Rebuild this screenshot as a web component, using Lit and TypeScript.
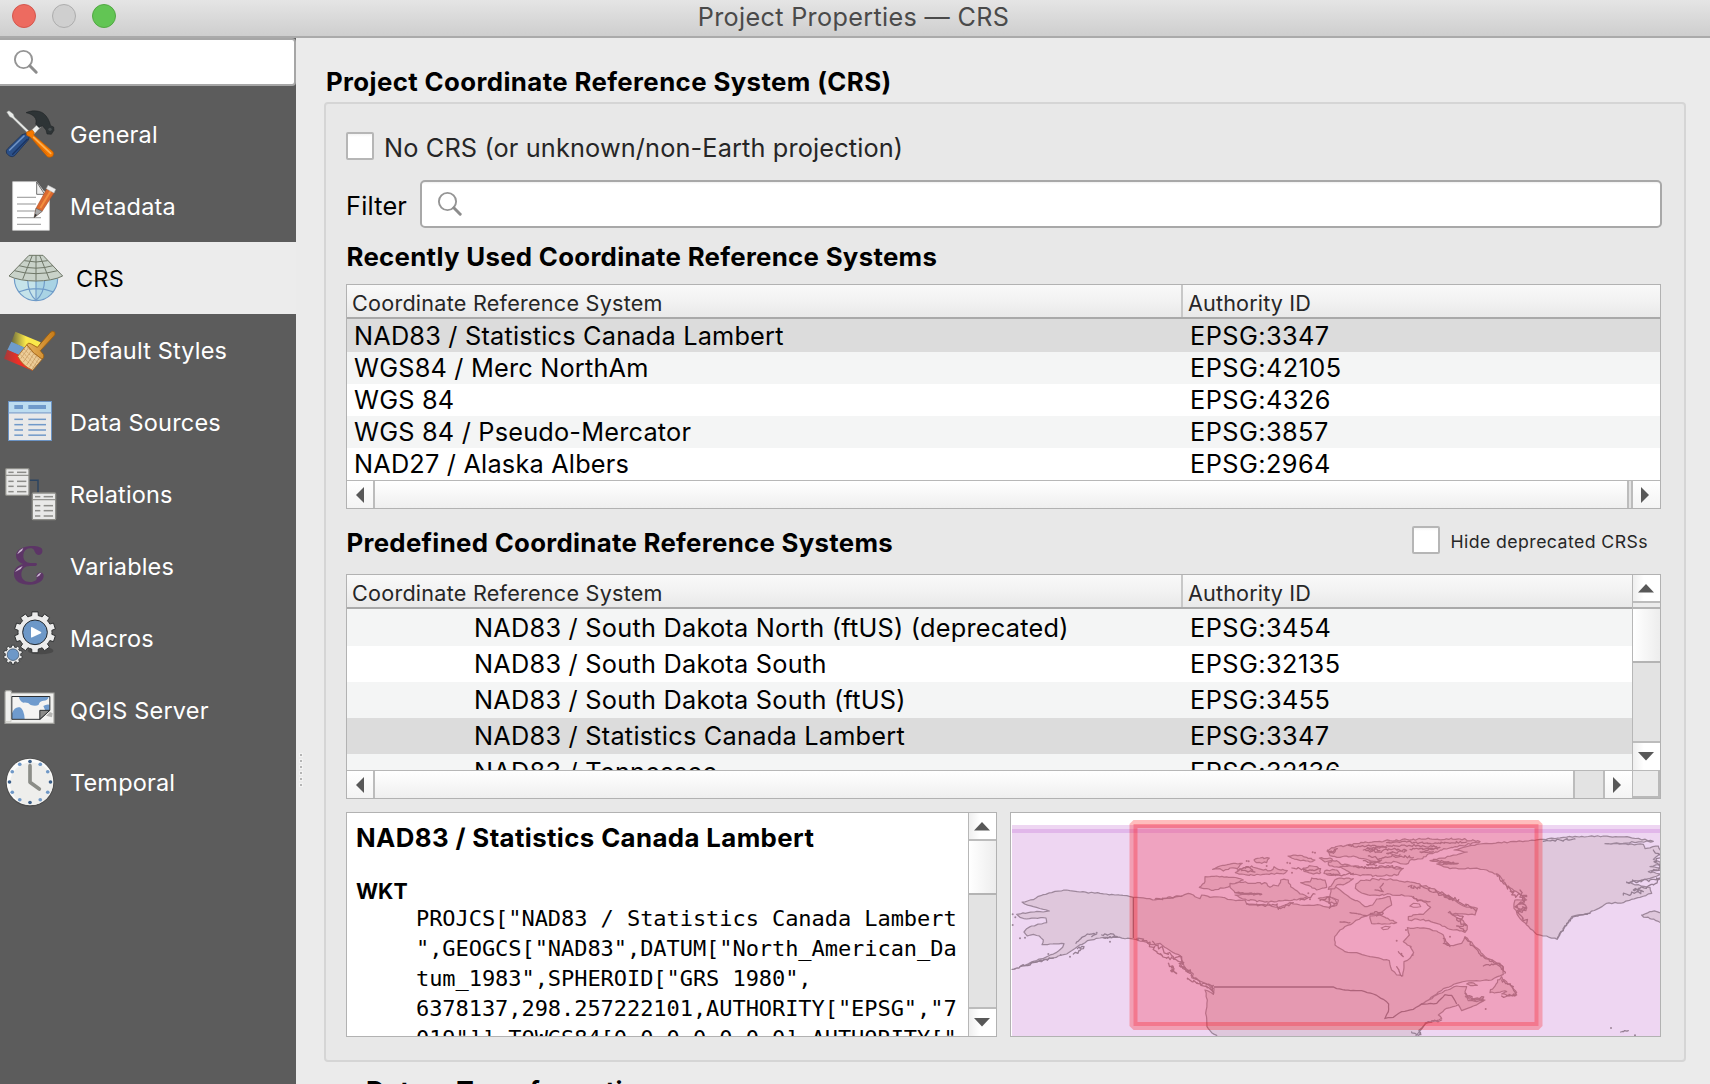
import { LitElement, html, svg, css } from "lit";
import { customElement, property } from "lit/decorators.js";
import { classMap } from "lit/directives/class-map.js";

type Pt = [number, number];

/* ---------- coastline helpers ---------- */

function parse(s: string): Pt[] {
  return s.trim().split(/\s+/).map((p) => p.split(",").map(Number) as Pt);
}

/** Subdivides each segment and nudges the new points, giving a ragged coast. */
function coast(s: string, amp = 4, closed = true, step = 9): string {
  const pts = parse(s);
  let seed = pts.length * 7919 + Math.round(pts[0][0] * 13 + pts[0][1] * 7);
  const rnd = () => {
    seed = (seed * 1103515245 + 12345) % 2147483648;
    return seed / 2147483648 - 0.5;
  };
  const out: string[] = [];
  const n = closed ? pts.length : pts.length - 1;
  for (let i = 0; i < n; i++) {
    const [x1, y1] = pts[i];
    const [x2, y2] = pts[(i + 1) % pts.length];
    const len = Math.hypot(x2 - x1, y2 - y1);
    const k = Math.max(1, Math.round(len / step));
    out.push(`${x1},${y1}`);
    if (len > 400) continue;
    for (let j = 1; j < k; j++) {
      const t = j / k;
      out.push(`${(x1 + (x2 - x1) * t + rnd() * amp).toFixed(1)},${(y1 + (y2 - y1) * t + rnd() * amp).toFixed(1)}`);
    }
  }
  if (!closed) out.push(pts[pts.length - 1].join(","));
  return "M" + out.join("L") + (closed ? "Z" : "");
}

const MAINLAND =
  "400,292 388,289 345,285 300,280 240,276 200,270 165,274 130,284 108,294 100,299 66,306 74,312 100,320 130,328 148,333 120,335 85,338 50,343 60,352 80,357 105,354 138,354 140,368 125,372 95,378 80,386 72,396 82,408 100,403 118,408 130,420 126,434 150,432 192,431 188,442 170,457 145,468 100,484 60,500 105,487 160,474 200,462 232,440 255,428 262,422 300,414 350,412 400,417 430,424 455,434 480,430 500,445 520,458 542,468 548,487 556,505 580,522 575,533 600,543 642,566 640,583 628,575 615,570 622,600 617,640 621,680 635,698 650,706 650,716 1248,716 1248,706 1262,690 1275,672 1310,662 1325,655 1315,645 1340,625 1375,614 1385,632 1420,618 1455,600 1430,605 1405,602 1400,590 1395,575 1400,560 1370,558 1310,585 1262,614 1310,582 1330,566 1370,550 1400,543 1440,543 1475,540 1510,523 1510,500 1485,485 1455,470 1432,445 1395,410 1385,430 1360,437 1335,430 1330,405 1310,393 1280,385 1222,383 1228,405 1210,425 1230,438 1241,458 1230,475 1212,485 1208,528 1190,525 1175,510 1168,482 1110,470 1070,458 1035,455 1005,435 1004,410 1020,390 1060,368 1085,352 1110,343 1140,340 1175,315 1170,290 1130,297 1118,315 1095,320 1080,307 1050,293 1012,264 995,260 988,292 1015,300 1010,316 988,322 960,315 900,315 870,308 835,322 800,315 740,312 735,300 700,300 660,291 630,292 605,285 600,296 580,285 565,280 545,289 500,295 465,300 440,296";

const GREENLAND =
  "1290,182 1370,165 1402,156 1362,150 1400,140 1440,132 1550,125 1630,118 1690,112 1810,108 1890,112 1960,124 1815,131 1930,133 1935,146 1975,138 1985,160 1960,178 1985,190 1950,200 1985,208 1945,215 1985,222 1950,235 1880,248 1950,262 1955,280 1920,292 1870,308 1820,310 1790,328 1760,341 1715,350 1695,380 1672,418 1640,408 1610,403 1580,375 1556,350 1542,325 1545,300 1580,300 1550,275 1520,258 1500,228 1460,210 1420,205 1350,206 1310,192 1372,192";

const BAFFIN =
  "1066,265 1068,252 1082,241 1125,237 1190,240 1250,250 1310,272 1360,297 1390,318 1432,325 1425,345 1350,340 1390,362 1402,378 1395,397 1360,390 1310,370 1270,358 1225,360 1225,350 1270,343 1292,322 1272,306 1225,288 1170,282 1120,285 1085,279";

const ISLES: [string, number][] = [
  ["615,230 650,228 700,232 730,240 710,248 690,258 640,271 598,262 612,250", 4],
  ["690,250 730,247 760,250 800,250 810,262 820,255 835,258 842,240 865,240 872,260 900,282 922,290 890,300 850,302 800,305 740,300 705,285 785,282 705,278 690,262", 5],
  ["638,208 660,198 700,190 727,190 712,206 690,204 670,213 660,206", 4],
  ["706,218 730,204 755,198 775,206 812,212 822,200 835,208 862,212 850,222 800,222 760,226 725,222", 5],
  ["762,180 780,174 808,174 800,188 770,188", 5],
  ["864,168 900,166 945,180 930,186 890,178", 4],
  ["910,204 935,198 962,206 962,218 935,220 912,214", 6],
  ["902,248 930,246 935,234 975,240 980,262 950,270 925,256", 4],
  ["958,174 990,174 998,182 975,186", 4],
  ["955,295 985,290 1005,298 1010,312 980,305", 5],
  ["981,153 995,143 1050,133 1110,127 1170,122 1270,117 1380,117 1440,125 1400,134 1340,147 1290,160 1268,176 1235,178 1225,190 1210,192 1190,186 1150,190 1120,184 1090,176 1060,168 1020,172 990,167", 6],
  ["985,186 1010,182 1022,192 1050,196 1018,202 990,198", 5],
  ["975,212 1010,210 1020,222 990,226 972,220", 5],
  ["1020,200 1060,198 1110,204 1170,202 1205,209 1195,224 1140,228 1060,224 1040,212", 5],
  ["985,268 1000,248 1012,236 1060,236 1035,252 1012,254 1004,266", 4],
  ["1110,348 1140,345 1190,368 1160,372 1115,371", 4],
  ["1470,578 1505,530 1520,545 1550,578 1545,588 1505,582 1520,575", 7],
  ["1400,552 1415,548 1432,556 1412,557", 3],
  ["1396,590 1450,598 1425,602", 5],
  ["1925,345 1955,335 1978,338 1995,345 1995,372 1950,356", 7],
];

const ROUGH: [string, number][] = [
  ["36,508 60,500 105,487 160,474", 9],
  ["228,430 250,410 262,402 290,402 275,410", 6],
  ["220,462 240,452 252,440 232,446", 9],
  ["305,405 330,402 352,410 310,414", 7],
  ["410,417 450,430 470,455 500,475 530,480 550,500 575,525 600,545 640,575", 13],
  ["458,424 490,450 520,470 545,470 545,495 570,520", 16],
  ["505,490 530,520 512,512 520,500", 9],
  ["562,537 600,552 640,556 640,582", 10],
  ["465,298 500,295 545,288", 6],
  ["740,312 790,316 832,312 835,328 880,308", 8],
  ["705,278 750,280 785,283", 4],
  ["712,210 745,200 765,216 725,212", 7],
  ["876,204 900,206 925,212 960,206", 8],
  ["900,300 925,292 945,282", 8],
  ["960,302 990,290 988,325 1010,310", 7],
  ["983,150 1000,160 1012,146 990,158", 6],
  ["1045,136 1080,140 1120,136 1160,142 1100,146 1140,152", 7],
  ["1090,150 1130,156 1170,148 1220,152 1160,160 1200,164", 8],
  ["1105,168 1140,176 1180,168 1240,172", 8],
  ["1090,182 1120,190 1145,180 1100,194 1130,196", 6],
  ["1160,128 1220,126 1270,130 1340,128 1400,126", 6],
  ["1160,136 1200,138 1250,136 1310,140", 6],
  ["1230,148 1280,146 1320,142 1260,156 1300,154", 6],
  ["1060,200 1110,205 1160,198 1210,205", 7],
  ["980,222 1020,226 1060,220", 6],
  ["1225,260 1270,262 1330,280 1380,308 1430,330", 12],
  ["1315,282 1345,290 1360,300 1335,292", 8],
  ["1345,338 1390,350 1370,360 1400,375 1370,378 1395,392", 10],
  ["1150,250 1140,262 1150,275 1125,270", 4],
  ["1240,290 1250,300 1290,305", 6],
  ["1050,338 1075,342 1100,347", 2],
  ["1020,366 1050,368", 3],
  ["1110,345 1125,335 1150,340 1130,348", 6],
  ["1490,222 1520,258 1545,285 1580,290 1560,310 1580,325 1556,340 1580,370", 16],
  ["1560,270 1572,300 1545,320 1580,322 1550,335", 14],
  ["1300,178 1340,186 1375,190 1330,192", 5],
  ["1630,124 1680,120 1725,117", 8],
  ["1672,415 1700,370 1720,350 1770,340", 6],
  ["1880,246 1950,240 1985,232 1960,255 1900,270 1930,275 1870,285", 10],
  ["1960,150 1985,170 1962,185 1985,200 1955,215", 10],
  ["1330,430 1350,440 1330,415", 6],
  ["1395,412 1435,455 1455,475 1500,490 1515,520", 8],
  ["1450,498 1490,492 1510,510", 5],
  ["1395,580 1420,600 1445,590 1450,602", 10],
  ["1505,540 1540,560 1550,585 1505,588", 10],
  ["1195,455 1210,470 1205,460", 7],
  ["1190,500 1200,520 1205,528", 5],
  ["1235,696 1262,704 1258,690 1285,665 1325,660", 10],
  ["1862,696 1885,692", 5],
];

const DOTS = "38,343 46,352 38,375 60,415 75,413 145,462 182,465 210,470 330,425 290,398 740,183 746,184 800,198 938,157 945,158 876,218 870,190 862,188 1218,390 1190,422 1232,440 1238,465 1457,627 1833,684 1905,706 1350,410 925,280 930,298";

/* ---------- sidebar icons ---------- */

const gearPath = (cx: number, cy: number, r1: number, r2: number, n: number) => {
  const p: string[] = [];
  for (let i = 0; i < n; i++) {
    const a = ((i + 0.5) / n) * Math.PI * 2;
    const s = Math.PI / n;
    for (const [r, d] of [[r2, -0.98], [r2, -0.62], [r1, -0.48], [r1, 0.48], [r2, 0.62]] as Pt[]) {
      p.push(`${(cx + r * Math.cos(a + d * s)).toFixed(1)},${(cy + r * Math.sin(a + d * s)).toFixed(1)}`);
    }
  }
  return "M" + p.join("L") + "Z";
};

const lines = (rows: number[], segs: Pt[], color: string, w: number) =>
  rows.map((y) => segs.map(([a, b]) => svg`<path d="M${a},${y}H${b}" stroke=${color} stroke-width=${w}/>`));

const miniTable = (x: number, y: number) => svg`
  <rect x=${x} y=${y} width="70" height="80" rx="3" fill="#e9e9e8" stroke="#8d8d88" stroke-width="4"/>
  <path d="M${x},${y + 20}h70" stroke="#8d8d88" stroke-width="3.5"/>
  ${lines([y + 11, y + 38, y + 53, y + 69], [[x + 8, x + 24], [x + 34, x + 62]], "#8d8d8a", 4.5)}`;

const ICONS: Record<string, unknown> = {
  General: svg`
    <path d="M20,336 L27,332 40,342 43,351 86,392 82,398 38,355 29,350Z" fill="#e9ebe9" stroke="#8b8d8b" stroke-width="1.5"/>
    <path d="M83,402 L114,372 123,380 95,410Z" fill="#eceeec" stroke="#a0a09e" stroke-width="1.5"/>
    <path d="M78,338 C96,330 118,331 130,340 C142,349 148,362 152,377 L161,381 162,391 154,403 141,402 138,390 127,377 117,383 107,372 C112,356 102,343 78,338Z" fill="#2e3436" stroke="#1c2022" stroke-width="1.5"/>
    <circle cx="150" cy="388" r="5" fill="#4a5052"/>
    <path d="M76,401 L88,409 85,420 44,467 Q37,473 28,468 L20,460 Q16,452 23,446 L66,404Z" fill="#2b5089" stroke="#16294a" stroke-width="2"/>
    <path d="M72,408 L29,450" stroke="#6f93c4" stroke-width="5" stroke-linecap="round"/>
    <path d="M82,418 L38,463" stroke="#1a3462" stroke-width="4" stroke-linecap="round"/>
    <path d="M80,396 L97,390 103,398 101,405 159,455 Q163,462 158,469 Q150,474 142,470 L92,412 80,406Z" fill="#f57900" stroke="#b95a00" stroke-width="2"/>
    <path d="M101,412 L152,460" stroke="#fcb255" stroke-width="5" stroke-linecap="round"/>
    <path d="M96,414 L142,464" stroke="#d86500" stroke-width="2.5"/>`,
  Metadata: svg`
    <path d="M38,545 H110 L130,572 148,584 V691 H38Z" fill="#fff" stroke="#d8d8d8" stroke-width="2"/>
    <path d="M110,546 V583 H134Z" fill="#efefef" stroke="#555" stroke-width="2.5"/>
    ${lines([592, 612, 633], [[51, 108]], "#a2a2a2", 3.5)}
    ${lines([653, 673], [[51, 123]], "#a2a2a2", 3.5)}
    <path d="M108,625 L140,567 162,579 127,633 103,652Z" fill="#dc6a30" stroke="#a3461c" stroke-width="1.5"/>
    <path d="M121,624 L152,573" stroke="#f28f3f" stroke-width="6"/>
    <path d="M108,625 L127,634 102,653Z" fill="#a9a9a9" stroke="#555" stroke-width="1.5"/>
    <path d="M106,641 L111,645 102,653Z" fill="#333"/>
    <path d="M139,566 L144,556 167,568 162,579Z" fill="#efefef" stroke="#b9b9b9" stroke-width="1.5"/>`,
  CRS: svg`
    <path d="M43,835 A65,67 0 0 0 173,835Z" fill="#a9d3e4"/>
    <path d="M43,835 A65,67 0 0 0 108,902 V835Z" fill="#c5e3ea"/>
    <g fill="none" stroke="#6f9bc8" stroke-width="3.5">
      <path d="M43,835 A65,67 0 0 0 173,835"/>
      <path d="M83,840 C84,870 95,890 108,901 C121,890 133,870 134,840"/>
      <path d="M55,876 Q108,856 161,876M108,840V901" />
    </g>
    <path d="M87,766 H129 L188,828 C150,848 66,848 27,828Z" fill="#c9d2c9"/>
    <g fill="none" stroke="#6f7768" stroke-width="3">
      <path d="M87,766 H129 L188,828 C150,848 66,848 27,828Z"/>
      <path d="M73,782 Q108,790 143,782M57,797 Q108,812 159,797M43,812 Q108,830 173,812"/>
      <path d="M97,766 L68,838M108,766V842M119,766 L148,838"/>
    </g>`,
  "Default Styles": svg`
    <defs>
      <linearGradient id="y" x1="0" x2="1"><stop offset="0" stop-color="#6b6a3c"/><stop offset=".5" stop-color="#fbe94a"/></linearGradient>
      <linearGradient id="r" x1="0" x2="1"><stop offset="0" stop-color="#a03b3b"/><stop offset=".5" stop-color="#ee2e26"/></linearGradient>
      <linearGradient id="w" x1="0" x2="1"><stop offset="0" stop-color="#e8b45e"/><stop offset="1" stop-color="#c57a17"/></linearGradient>
    </defs>
    <path d="M46,65 L122,97 108,128 34,96Z" fill="url(#y)"/>
    <path d="M34,95 L104,126 94,152 22,120Z" fill="#6f9ccc"/>
    <path d="M22,119 L92,150 98,182 12,146Z" fill="url(#r)"/>
    <path d="M80,104 Q86,96 94,102 L112,112 150,68 Q158,60 165,67 Q167,75 160,80 L121,122 131,134 Q134,142 126,148 Q100,132 80,104Z" fill="url(#w)" stroke="#9a5b0c" stroke-width="2.5"/>
    <path d="M80,105 Q100,132 126,148 L98,181 Q68,168 53,139Z" fill="#edcd98" stroke="#a8691c" stroke-width="2.5"/>
    <path d="M72,117 L116,160M65,124 L109,167M59,132 L103,174M82,112 L120,152" stroke="#b98a4b" stroke-width="2" stroke-dasharray="4 3"/>
    <path d="M86,113 L62,146M94,122 L70,156M102,130 L80,165M110,137 L88,172M118,144 L96,178" stroke="#c3965a" stroke-width="2"/>`,
  "Data Sources": svg`
    <rect x="25.5" y="274.5" width="129" height="117" fill="#e9e9e9" stroke="#6b93c4" stroke-width="3"/>
    <rect x="27" y="276" width="126" height="31" fill="#bcdcf0"/>
    <path d="M26,308.5H154" stroke="#7ea3cf" stroke-width="4"/>
    ${lines([291], [[43, 69], [85, 138]], "#6f9acb", 12)}
    ${lines([328, 344, 360, 375.5], [[43, 69], [85, 138]], "#7099c9", 4.5)}`,
  Relations: svg`
    <path d="M88,511 H114 V548" fill="none" stroke="#2c4460" stroke-width="4.5"/>
    ${miniTable(17, 476)}${miniTable(97, 549)}`,
  Variables: svg`
    <path d="M127,29 C125,20 105,16 86,19 C62,22 47,33 48,48 C49,60 58,68 70,72 C52,76 41,87 42,104 C43,124 64,135 90,134 C115,133 131,122 131,107 C131,99 124,96 117,98 C110,100 107,107 110,113 C112,120 102,126 90,126 C74,126 64,117 64,103 C64,88 74,78 90,78 H106 Q111,77 111,73 Q111,69 106,69 H92 C78,69 70,60 70,48 C70,34 79,25 90,25 C102,25 102,31 105,37 C109,47 124,48 127,36Z" fill="#5c3566"/>
    <path d="M52,43 Q56,30 70,24 L66,32Z M45,96 Q52,84 68,78 L62,87Z M109,112 Q113,100 124,98 L118,107Z" fill="#cdb9d3"/>`,
  Macros: svg`
    <ellipse cx="122" cy="332" rx="38" ry="11" fill="#4a4a4a"/>
    <path d=${gearPath(105, 277, 62, 51, 10)} fill="#ececec" stroke="#2f3132" stroke-width="3"/>
    <circle cx="105" cy="277" r="37" fill="#6d98c8" stroke="#24292e" stroke-width="3"/>
    <path d="M93,263 V291 Q93,294 97,292 L123,280 Q125,278 123,276 L97,262 Q93,260 93,263Z" fill="#fff"/>
    <path d=${gearPath(39, 344, 28.5, 23, 10)} fill="#ececec" stroke="#2f3132" stroke-width="2.5"/>
    <circle cx="39" cy="344" r="17.5" fill="#6d98c8" stroke="#35485c" stroke-width="2"/>`,
  "QGIS Server": svg`
    <path d="M15,457 Q15,452 20,452 H30 Q35,452 35,459 H162 V550 H15Z" fill="#f0f0ee" stroke="#a0a09c" stroke-width="3.5"/>
    <path d="M33,460 V545 H17" fill="none" stroke="#c6c6c2" stroke-width="2.5"/>
    <rect x="35.5" y="469.5" width="114" height="68" fill="#f4f4f2"/>
    <path d="M57,470 H146 Q144,482 130,482 Q118,484 116,494 Q108,500 92,495 Q84,486 70,488 Q58,482 57,470Z M36,520 Q44,498 60,502 Q72,508 74,537 H36Z M130,498 Q138,492 149,494 V512 H136Z" fill="#6f9bcd"/>
    <path d="M35.5,469.5 H149.5 V511 L120,538 H35.5Z" fill="none" stroke="#2c2f31" stroke-width="3"/>
    <path d="M149.5,511 H119.5 V538Z" fill="#8b8b89" stroke="#2c2f31" stroke-width="3"/>
    <path d="M138,527 L150,516 158,520 156,532Z" fill="#b5b5b3"/>`,
  Temporal: svg`
    <circle cx="90" cy="727" r="73" fill="#4e4e4e"/>
    <circle cx="90" cy="726" r="70" fill="#fbfbfa"/>
    <circle cx="94" cy="731" r="64" fill="#eeeeec"/>
    ${Array.from({ length: 12 }, (_, i) => {
      const a = (i * Math.PI) / 6;
      return svg`<circle cx=${(90 + 61.5 * Math.sin(a)).toFixed(1)} cy=${(726 - 61.5 * Math.cos(a)).toFixed(1)} r="5.5" fill=${i % 3 ? "#6f98c7" : "#3b5f8a"}/>`;
    })}
    <path d="M90,677 V727 L118,747" fill="none" stroke="#8b8d88" stroke-width="11" stroke-linecap="round" stroke-linejoin="round"/>`,
};

const NAV: { name: string; top: number; active?: boolean }[] = [
  { name: "General", top: 294 },
  { name: "Metadata", top: 510 },
  { name: "CRS", top: 726, active: true },
  { name: "Default Styles", top: 12 },
  { name: "Data Sources", top: 228 },
  { name: "Relations", top: 444 },
  { name: "Variables", top: -30 },
  { name: "Macros", top: 186 },
  { name: "QGIS Server", top: 402 },
  { name: "Temporal", top: 618 },
];

const magnifier = html`<svg class="mag" width="26" height="26" viewBox="0 0 26 26">
  <circle cx="10.5" cy="10.5" r="8.6" fill="none" stroke="#959595" stroke-width="1.9"/>
  <path d="M16.8,16.8 L23.2,23.2" stroke="#8c8c8c" stroke-width="3" stroke-linecap="round"/>
</svg>`;

/* ---------- scroll bars ---------- */

@customElement("scroll-bar")
export class ScrollBar extends LitElement {
  @property({ type: Boolean, reflect: true }) vertical = false;
  /** Length of the empty stretch before the handle, then the handle itself. */
  @property({ type: Number }) before = 0;
  @property({ type: Number }) handle = 50;

  static styles = css`
    :host { display: flex; box-sizing: border-box; height: 28px; border-top: 1px solid #b7b7b7; background: #e3e3e3; }
    :host([vertical]) { flex-direction: column; height: auto; width: 28px; border-top: 0; border-left: 1px solid #b7b7b7; }
    .btn { flex: none; box-sizing: border-box; width: 28px; display: flex; align-items: center; justify-content: center; background: linear-gradient(#fff, #f4f4f4); }
    .start { border-right: 2px solid #bcbcbc; }
    .end { border-left: 2px solid #bcbcbc; width: 29px; padding-right: 3px; }
    .handle { flex: none; box-sizing: border-box; border-right: 2px solid #bcbcbc; background: linear-gradient(#fff, #efefef); }
    .space { flex: 1; }
    :host([vertical]) .btn { width: auto; height: 28px; padding-right: 2px; background: linear-gradient(90deg, #efefef, #fff 40%); }
    :host([vertical]) .start { border-right: 0; border-bottom: 2px solid #bcbcbc; }
    :host([vertical]) .end { border-left: 0; border-top: 2px solid #bcbcbc; height: 29px; }
    :host([vertical]) .handle { border-right: 0; border-bottom: 2px solid #b4b4b4; background: linear-gradient(90deg, #fff, #ededed); }
    .lead { flex: none; box-sizing: border-box; border-bottom: 2px solid #b4b4b4; background: #ececec; }
    svg { fill: #585858; display: block; }
  `;

  render() {
    const v = this.vertical;
    const dim = (n: number) => (v ? `height:${n}px` : `width:${n}px`);
    return html`
      <div class="btn start">
        ${v
          ? html`<svg width="16" height="9"><path d="M8,0 L16,8.5 H0Z"/></svg>`
          : html`<svg width="8" height="16"><path d="M0,8 L8,0 V16Z"/></svg>`}
      </div>
      ${this.before ? html`<div class="lead" style=${dim(this.before)}></div>` : ""}
      <div class="handle" style=${dim(this.handle)}></div>
      <div class="space"></div>
      <div class="btn end">
        ${v
          ? html`<svg width="16" height="9"><path d="M8,8.5 L16,0 H0Z"/></svg>`
          : html`<svg width="8" height="16"><path d="M8,8 L0,0 V16Z"/></svg>`}
      </div>`;
  }
}

/* ---------- CRS tables ---------- */

interface Row { name: string; id: string; selected?: boolean; alt?: boolean }

@customElement("crs-table")
export class CrsTable extends LitElement {
  @property({ attribute: false }) rows: Row[] = [];
  @property({ type: Boolean, reflect: true }) tree = false;

  static styles = css`
    :host { display: flex; flex-direction: column; box-sizing: border-box; height: 225px; border: 1px solid #b2b2b2; background: #fff; overflow: hidden; }
    .view { display: flex; height: 195px; }
    .grid { flex: 1; min-width: 0; overflow: hidden; }
    .head, .row { display: grid; grid-template-columns: 836px 1fr; align-items: stretch; }
    .head { height: 34px; box-sizing: border-box; border-bottom: 2px solid #a9a9a9; background: linear-gradient(#f9f9f9, #f2f2f2 50%, #e9e9e9); font-size: 21.6px; letter-spacing: 0.24px; line-height: 32px; color: #262626; }
    .head div { padding: 2px 0 0 5px; height: 30px; }
    .head div:first-child { border-right: 2px solid #c8c8c8; }
    .head div:last-child { padding-left: 5px; letter-spacing: 0.15px; }
    .row { height: 32px; line-height: 32px; font-size: 25.3px; letter-spacing: 0.2px; color: #000; white-space: pre; }
    .row:nth-child(2) { height: 33px; line-height: 34px; }
    .row div { padding-left: 7px; }
    .row div:last-child { letter-spacing: 0.44px; }
    .alt { background: #f4f5f5; }
    .selected { background: #dcdcdc; }
    :host([tree]) .row { height: 36px; line-height: 36px; letter-spacing: 0.24px; }
    :host([tree]) .row:nth-child(2) { height: 37px; line-height: 38px; }
    :host([tree]) .row div:first-child { padding-left: 127px; }
    .foot { display: flex; }
    .foot scroll-bar { flex: 1; }
    .corner { flex: none; box-sizing: border-box; width: 28px; height: 28px; border: 1px solid #b9b9b9; border-right-width: 2px; border-bottom-width: 2px; background: #ebebeb; }
  `;

  render() {
    return html`
      <div class="view">
        <div class="grid">
          <div class="head"><div>Coordinate Reference System</div><div>Authority ID</div></div>
          ${this.rows.map((r) => html`
            <div class=${classMap({ row: true, alt: !!r.alt, selected: !!r.selected })}>
              <div>${r.name}</div><div>${r.id}</div>
            </div>`)}
        </div>
        ${this.tree ? html`<scroll-bar vertical .before=${6} .handle=${54}></scroll-bar>` : ""}
      </div>
      <div class="foot">
        <scroll-bar .handle=${this.tree ? 1200 : 1254}></scroll-bar>
        ${this.tree ? html`<div class="corner"></div>` : ""}
      </div>`;
  }
}

/* ---------- extent preview ---------- */

@customElement("extent-map")
export class ExtentMap extends LitElement {
  static styles = css`
    :host { display: block; box-sizing: border-box; border: 1px solid #b2b2b2; background: #fff; overflow: hidden; }
    svg { display: block; }
    .land { fill: #dfc7dc; stroke: #9d879b; stroke-width: 3.7; stroke-linejoin: round; }
    .rough { fill: none; stroke: #957f93; stroke-width: 3.8; stroke-linejoin: round; stroke-linecap: round; }
    .border { fill: none; stroke: #8c768a; stroke-width: 3.8; }
    .dot { fill: #9b8599; }
    .bay { fill: #eed6f2; stroke: #9d879b; stroke-width: 3.2; }
  `;

  render() {
    return html`<svg width="649" height="223" viewBox="1011 813 649 223">
      <rect x="1012" y="825" width="648" height="211" fill="#eed6f2"/>
      <rect x="1012" y="829" width="648" height="4" fill="#e1b7ea"/>
      <g transform="translate(1000 800) scale(.33333)">
        <path class="land" d=${coast(MAINLAND, 3.5)}/>
        <path class="land" d=${coast(GREENLAND, 4)}/>
        <path class="land" d=${coast(BAFFIN, 6)}/>
        ${ISLES.map(([s, a]) => svg`<path class="land" d=${coast(s, a, true, 7)}/>`)}
        <path class="bay" d=${coast("1230,318 1240,310 1258,312 1262,320 1240,322", 2)}/>
        <path class="bay" d="M1144,384 l12,-5 l14,2 l-6,6 l-14,2z"/>
        ${ROUGH.map(([s, a]) => svg`<path class="rough" d=${coast(s, a, false, 5)}/>`)}
        ${parse(DOTS).map(([x, y]) => svg`<circle class="dot" cx=${x} cy=${y} r="3"/>`)}
        <path class="border" d="M400,292V414"/>
        <path class="border" d=${"M642,561H1000l10,5" + coast("1010,566 1035,570 1085,572 1120,582 1150,598 1166,612 1165,635 1155,655 1180,652 1205,635 1240,628 1265,612 1310,610 1335,584 1355,586 1370,612", 2, false)}/>
      </g>
      <rect x="1133.5" y="824" width="405" height="202" fill="#f23c5a" fill-opacity=".33"/>
      <rect x="1133.5" y="824" width="405" height="202" fill="none" stroke="#ff0000" stroke-opacity=".26" stroke-width="8" stroke-linejoin="bevel"/>
    </svg>`;
  }
}

/* ---------- window ---------- */

const RECENT: Row[] = [
  { name: "NAD83 / Statistics Canada Lambert", id: "EPSG:3347", selected: true },
  { name: "WGS84 / Merc NorthAm", id: "EPSG:42105", alt: true },
  { name: "WGS 84", id: "EPSG:4326" },
  { name: "WGS 84 / Pseudo-Mercator", id: "EPSG:3857", alt: true },
  { name: "NAD27 / Alaska Albers", id: "EPSG:2964" },
];

const PREDEFINED: Row[] = [
  { name: "NAD83 / South Dakota North (ftUS) (deprecated)", id: "EPSG:3454", alt: true },
  { name: "NAD83 / South Dakota South", id: "EPSG:32135" },
  { name: "NAD83 / South Dakota South (ftUS)", id: "EPSG:3455", alt: true },
  { name: "NAD83 / Statistics Canada Lambert", id: "EPSG:3347", selected: true },
  { name: "NAD83 / Tennessee", id: "EPSG:32136", alt: true },
];

const WKT = [
  'PROJCS["NAD83 / Statistics Canada Lambert',
  '",GEOGCS["NAD83",DATUM["North_American_Da',
  'tum_1983",SPHEROID["GRS 1980",',
  '6378137,298.257222101,AUTHORITY["EPSG","7',
  '019"]],TOWGS84[0,0,0,0,0,0,0],AUTHORITY["',
].join("\n");

@customElement("app-root")
export class AppRoot extends LitElement {
  static styles = css`
    :host { display: block; height: 1084px; overflow: hidden; background: #ebebeb; font-family: Inter, "Liberation Sans", sans-serif; color: #000; }
    .titlebar { position: relative; box-sizing: border-box; height: 38px; display: flex; align-items: center; justify-content: center; background: linear-gradient(#e5e5e5, #cecece); border-bottom: 2px solid #aaa; }
    .title { font-size: 25.2px; letter-spacing: 0.34px; line-height: 32px; color: #4a4a4a; padding-right: 3px; margin-top: -3px; }
    .lights { position: absolute; left: 12px; top: 4px; display: flex; gap: 16px; }
    .light { box-sizing: border-box; width: 24px; height: 24px; border-radius: 50%; border: 1px solid; }
    .red { background: #ed6b60; border-color: #d4564d; }
    .grey { background: #cfcfcf; border-color: #adadad; }
    .green { background: #62c554; border-color: #52a843; }
    .body { display: flex; height: 1046px; }

    .sidebar { flex: none; width: 296px; background: #5c5c5c; }
    .search { box-sizing: border-box; height: 48px; margin-bottom: 12px; display: flex; align-items: center; padding: 0 0 0 13px; background: #fff; border: 2px solid #a6a6a6; border-left: 0; border-radius: 0 4px 4px 0; }
    .nav { display: flex; align-items: center; height: 72px; color: #fff; font-size: 23.5px; letter-spacing: 0.17px; line-height: 32px; }
    .nav svg { flex: none; margin-right: 4px; }
    .nav span { padding-top: 2px; }
    .nav.active { background: #ececec; color: #000; }
    .nav.active svg { margin-right: 10px; }

    .splitter { flex: none; width: 10px; display: flex; flex-direction: column; align-items: center; gap: 4px; padding-top: 716px; }
    .splitter i { width: 2px; height: 2px; background: #b5b5b5; outline: 1px solid #f3f3f3; }

    .main { width: 1362px; padding: 28px 0 0 18px; }
    h2 { margin: 0; font-size: 25.8px; line-height: 32px; font-weight: 700; letter-spacing: 0.3px; white-space: nowrap; }
    .page { letter-spacing: 0.39px; padding-left: 2px; }
    .next { margin-top: 13px; padding-left: 42px; }
    .group { box-sizing: border-box; height: 960px; margin-top: 4px; padding: 28px 0 0 20px; border: 2px solid #d5d5d5; border-radius: 4px; background: #e8e8e8; display: flex; flex-direction: column; align-items: flex-start; }
    .check { display: flex; align-items: center; height: 28px; font-size: 25.3px; letter-spacing: 0.14px; color: #262626; white-space: nowrap; }
    .check span:last-child { padding-top: 2px; }
    .box { flex: none; box-sizing: border-box; width: 28px; height: 28px; border: 2px solid #b6b6b6; border-radius: 2px; background: linear-gradient(#f4f4f4, #fff 3px); margin-right: 10px; }
    .filter { display: flex; align-items: center; width: 1316px; height: 48px; margin: 20px 0 12px; }
    .filter label { flex: none; width: 74px; box-sizing: border-box; font-size: 25.3px; letter-spacing: 0.2px; padding-top: 2px; }
    .input { flex: 1; box-sizing: border-box; height: 48px; display: flex; align-items: center; padding-left: 15px; background: linear-gradient(#f0f0f0, #fff 2px); border: 2px solid #a8a8a8; border-radius: 5px; }
    .mag { display: block; }
    crs-table { width: 1315px; flex: none; }
    .gap { margin: 1px 0 11px; padding-left: 0.5px; }
    .pre { display: flex; justify-content: space-between; width: 1302px; height: 28px; margin: 17px 0 20px; }
    .pre h2 { padding: 1px 0 0 0.5px; }
    .small { font-size: 17.7px; letter-spacing: 0.42px; }
    .small .box { margin-right: 10px; }
    .details { display: flex; gap: 13px; width: 1315px; height: 225px; margin-top: 13px; }
    .info { box-sizing: border-box; width: 651px; display: flex; background: #fff; border: 1px solid #b2b2b2; overflow: hidden; }
    .text { flex: 1; min-width: 0; overflow: hidden; padding: 9px 0 0 9px; }
    .text h2 { letter-spacing: 0.39px; }
    .text h3 { margin: 22px 0 0; font-size: 21.3px; line-height: 30px; font-weight: 700; letter-spacing: 0; }
    pre { margin: -2px 0 0 60px; font: 22px/30px "DejaVu Sans Mono", "Liberation Mono", monospace; letter-spacing: -0.06px; }
    extent-map { width: 651px; height: 225px; }
  `;

  render() {
    return html`
      <div class="titlebar">
        <div class="lights">
          <span class="light red"></span><span class="light grey"></span><span class="light green"></span>
        </div>
        <div class="title">Project Properties — CRS</div>
      </div>
      <div class="body">
        <div class="sidebar">
          <div class="search">${magnifier}</div>
          ${NAV.map((n) => html`
            <div class=${classMap({ nav: true, active: !!n.active })}>
              <svg width="66" height="72" viewBox="0 ${n.top} 198 216">${ICONS[n.name]}</svg>
              <span>${n.name}</span>
            </div>`)}
        </div>
        <div class="splitter"><i></i><i></i><i></i><i></i><i></i><i></i></div>
        <div class="main">
          <h2 class="page">Project Coordinate Reference System (CRS)</h2>
          <div class="group">
            <div class="check"><span class="box"></span><span>No CRS (or unknown/non-Earth projection)</span></div>
            <div class="filter">
              <label>Filter</label>
              <div class="input">${magnifier}</div>
            </div>
            <h2 class="gap">Recently Used Coordinate Reference Systems</h2>
            <crs-table .rows=${RECENT}></crs-table>
            <div class="pre">
              <h2>Predefined Coordinate Reference Systems</h2>
              <div class="check small"><span class="box"></span><span>Hide deprecated CRSs</span></div>
            </div>
            <crs-table tree .rows=${PREDEFINED}></crs-table>
            <div class="details">
              <div class="info">
                <div class="text">
                  <h2>NAD83 / Statistics Canada Lambert</h2>
                  <h3>WKT</h3>
                  <pre>${WKT}</pre>
                </div>
                <scroll-bar vertical .handle=${54}></scroll-bar>
              </div>
              <extent-map></extent-map>
            </div>
          </div>
          <h2 class="next">Datum Transformations</h2>
        </div>
      </div>`;
  }
}
